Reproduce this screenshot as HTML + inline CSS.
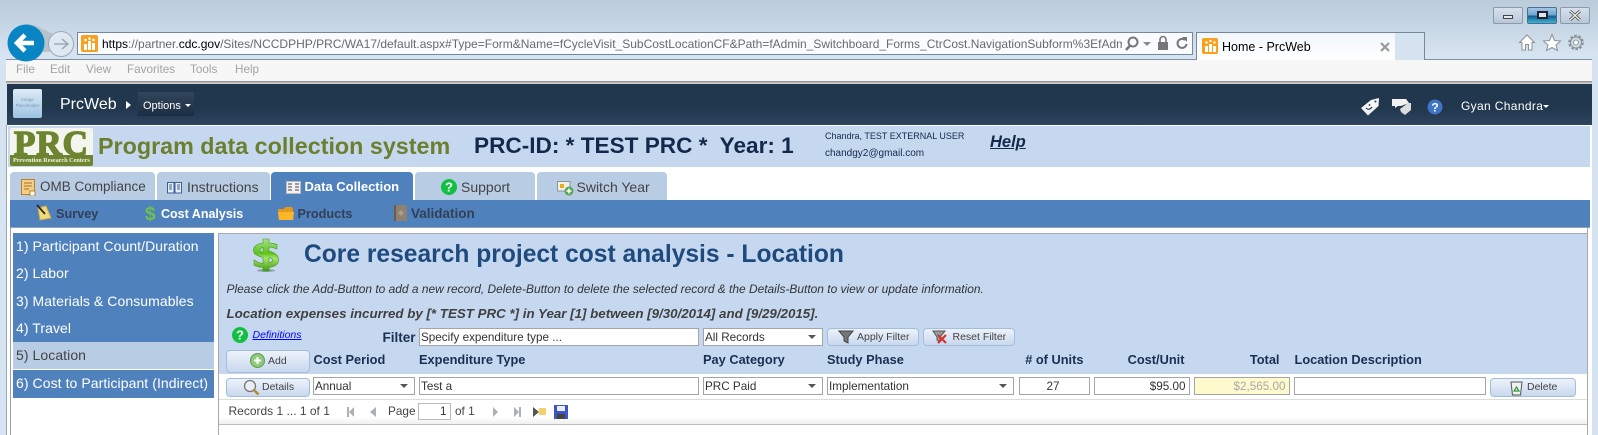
<!DOCTYPE html>
<html><head><meta charset="utf-8"><title>Home - PrcWeb</title>
<style>
html,body{margin:0;padding:0;width:1598px;height:435px;overflow:hidden;background:#d6e4f2;font-family:"Liberation Sans",Arial,sans-serif}
.a{position:absolute}
.t{position:absolute;white-space:nowrap;height:20px;line-height:20px}
.inp{position:absolute;box-sizing:border-box;background:#fff;border:1px solid #a5a5a5;height:18px;line-height:17px;font-size:11.7px;color:#333;padding:0 3px 0 1px;white-space:nowrap;overflow:hidden}
.sel:after{content:"";position:absolute;right:6px;top:6px;border-left:4px solid transparent;border-right:4px solid transparent;border-top:4px solid #555}
.btn{position:absolute;box-sizing:border-box;border:1px solid #a3bddc;border-radius:4px;background:linear-gradient(#edf2fa,#c8d8ee);font-size:10.5px;color:#444;line-height:17px}
.h{position:absolute;white-space:nowrap;font-weight:bold;font-size:12.8px;color:#1b2f52;height:20px;line-height:20px;top:350px}
.side{position:absolute;left:13px;width:201px;height:27.3px;background:#4f81bd;color:#fff;font-size:14px;letter-spacing:.07px;line-height:27px;padding-left:3px;box-sizing:border-box;white-space:nowrap}
.tab{position:absolute;top:172px;height:28px;background:#b8cce4;border-radius:4px 4px 0 0}
.tt{position:absolute;white-space:nowrap;font-size:14px;color:#444;top:177px;height:20px;line-height:20px}
.st{position:absolute;white-space:nowrap;font-size:13.5px;font-weight:bold;color:#333f55;top:204px;height:20px;line-height:20px}
.m{position:absolute;top:60px;font-size:11.7px;color:#a3a3a3;line-height:20px;height:20px}
</style></head><body>

<!-- chrome -->
<div class="a" style="left:0;top:0;width:1598px;height:59px;background:linear-gradient(#bccbd9 0,#c2d1df 15px,#d6e4f2 55px)"></div>
<div class="a" style="left:6px;top:59px;width:1586px;height:1px;background:#7f8fa4"></div>
<div class="a" style="left:6px;top:60px;width:1586px;height:21px;background:#f7f7f7"></div>
<div class="m" style="left:16px">File</div><div class="m" style="left:50px">Edit</div><div class="m" style="left:86px">View</div><div class="m" style="left:127px">Favorites</div><div class="m" style="left:190px">Tools</div><div class="m" style="left:235px">Help</div>
<div class="a" style="left:6px;top:81px;width:1586px;height:3px;background:linear-gradient(#8a8a8a,#e0e0e0)"></div>

<!-- back / forward -->
<svg class="a" style="left:4px;top:22px" width="80" height="40" viewBox="0 0 80 40">
<path d="M22 2 C34 2 42 10 50 12 L46 30 L22 30Z" fill="#b6c2cc"/>
<circle cx="22" cy="21" r="18.5" fill="#0a85c4"/>
<path d="M13 21H30M21 13L13 21L21 29" fill="none" stroke="#fff" stroke-width="4.5"/>
<circle cx="57" cy="22" r="12.5" fill="#dde8f3" stroke="#9eaab6"/>
<path d="M50 22H63M58 17L64 22L58 27" fill="none" stroke="#9eaab6" stroke-width="1.5"/>
</svg>

<!-- address bar -->
<div class="a" style="left:77px;top:32px;width:1116px;height:23px;box-sizing:border-box;background:#f9fbfe;border:1px solid #76889a"></div>
<svg class="a" style="left:81px;top:35px" width="17" height="17"><rect width="17" height="17" rx="2" fill="#f9a01e"/><path d="M3 9h3v6H3zM7 6h3v9H7zM11 8h3v7h-3z" fill="#fff"/><circle cx="4.500" cy="5" r="1.300" fill="#fff"/><circle cx="8.500" cy="3.500" r="1.300" fill="#fff"/><circle cx="12.500" cy="5" r="1.300" fill="#fff"/></svg>
<div class="t" style="left:102px;top:34px;width:1020px;overflow:hidden;font-size:12px;color:#6a6a6a"><span style="color:#000">https</span>://partner.<span style="color:#000">cdc.gov</span>/Sites/NCCDPHP/PRC/WA17/default.aspx#Type=Form&amp;Name=fCycleVisit_SubCostLocationCF&amp;Path=fAdmin_Switchboard_Forms_CtrCost.NavigationSubform%3EfAdm</div>
<svg class="a" style="left:1124px;top:35px" width="68" height="17" fill="none">
<circle cx="9" cy="7" r="4.500" stroke="#777" stroke-width="2"/><path d="M6 10.500L2 15" stroke="#777" stroke-width="2.500"/>
<path d="M19 7h8l-4 4z" fill="#888"/>
<rect x="34" y="7" width="10" height="8" fill="#777"/><path d="M36 7V4.500a3 3 0 0 1 6 0V7" stroke="#777" stroke-width="1.600"/>
<path d="M61 5a4.500 4.500 0 1 0 1.500 4" stroke="#777" stroke-width="2"/><path d="M58 2h5v5z" fill="#777"/>
</svg>

<!-- browser tab -->
<div class="a" style="left:1196px;top:32px;width:200px;height:28px;box-sizing:border-box;background:linear-gradient(#f2f6fb,#fff);border:1px solid #76889a;border-bottom:0"></div>
<div class="a" style="left:1395px;top:32px;width:30px;height:28px;box-sizing:border-box;background:#d6e4f2;border:1px solid #76889a;border-left:0;border-bottom:0"></div>
<svg class="a" style="left:1202px;top:38px" width="16" height="16"><rect width="16" height="16" rx="2" fill="#f9a01e"/><path d="M3 8h3v6H3zM7 6h3v8H7zM11 8h3v6h-3z" fill="#fff"/><circle cx="4.500" cy="4.500" r="1.200" fill="#fff"/><circle cx="8.500" cy="3" r="1.200" fill="#fff"/><circle cx="12.500" cy="4.500" r="1.200" fill="#fff"/></svg>
<div class="t" style="left:1222px;top:37px;font-size:12.500px;color:#000">Home - PrcWeb</div>
<svg class="a" style="left:1380px;top:42px" width="10" height="10"><path d="M1 1L9 9M9 1L1 9" stroke="#999" stroke-width="2.200"/></svg>

<!-- window controls -->
<div class="a" style="left:1493px;top:7px;width:30px;height:17px;box-sizing:border-box;border:1px solid #8a99ab;border-radius:2px;background:linear-gradient(#d6e1ec,#b8c7d7)"></div>
<div class="a" style="left:1503px;top:15px;width:10px;height:4px;box-sizing:border-box;background:#e8e8e8;border:1px solid #444"></div>
<div class="a" style="left:1527px;top:7px;width:30px;height:17px;box-sizing:border-box;border:1px solid #47708f;border-radius:2px;background:linear-gradient(#a4c8e6 0,#6fa5d0 45%,#15608f 55%,#3fb2d6)"></div>
<div class="a" style="left:1537px;top:11px;width:11px;height:8px;box-sizing:border-box;background:#dfe7ee;border:2px solid #223"></div>
<div class="a" style="left:1560px;top:7px;width:30px;height:17px;box-sizing:border-box;border:1px solid #8a99ab;border-radius:2px;background:linear-gradient(#d6e1ec,#b8c7d7)"></div>
<svg class="a" style="left:1568px;top:10px" width="14" height="11"><path d="M2 1L12 10M12 1L2 10" stroke="#555" stroke-width="3"/><path d="M2 1L12 10M12 1L2 10" stroke="#eee" stroke-width="1.200"/></svg>

<!-- home star gear -->
<svg class="a" style="left:1518px;top:33px" width="68" height="19" fill="#fff" stroke="#8c9197">
<path d="M9 2L1.500 9.500H4V17H7.500V11.500H10.500V17H14V9.500H16.500Z"/>
<path d="M34 1.500L36.500 7.500L42.500 8L38 12L39.500 17.500L34 14.500L28.500 17.500L30 12L25.500 8L31.500 7.500Z"/>
<circle cx="58" cy="9.500" r="6.500" stroke-width="2.500" stroke-dasharray="2.500 1.600" fill="none"/><circle cx="58" cy="9.500" r="5.500" fill="none"/><circle cx="58" cy="9.500" r="2.500"/>
</svg>

<!-- nav -->
<div class="a" style="left:7px;top:84px;width:1585px;height:41px;background:linear-gradient(#21374e 0,#21374e 24px,#2e445e)"></div>
<div class="a" style="left:13px;top:89px;width:29px;height:29px;border-radius:2px;background:linear-gradient(#dfeaf5,#9cc4e2);font-size:4.500px;line-height:6px;color:#7a9dbb;text-align:center;box-sizing:border-box;padding-top:8px">Image<br>Placeholder</div>
<div class="t" style="left:60px;top:95px;font-size:16px;color:#fff">PrcWeb</div>
<div class="a" style="left:126px;top:101px;border-left:5px solid #fff;border-top:4px solid transparent;border-bottom:4px solid transparent"></div>
<div class="a" style="left:138px;top:92px;width:56px;height:24px;background:linear-gradient(#32465c,#1b2e43)"></div>
<div class="t" style="left:143px;top:96px;font-size:11px;color:#fff">Options</div>
<div class="a" style="left:185px;top:104px;border-top:3px solid #fff;border-left:3px solid transparent;border-right:3px solid transparent"></div>
<svg class="a" style="left:1360px;top:97px" width="84" height="20">
<path d="M1 11L11 3L19 1L18.500 9L8 18.500Z" fill="#f4f4f4"/><path d="M6 11q3 3 6-1" fill="none" stroke="#21374e" stroke-width="1.100"/><circle cx="9.500" cy="8" r=".9" fill="#21374e"/><circle cx="15.500" cy="4.500" r="1" fill="#21374e"/>
<path d="M32 2H46L49 6L41 9L38 9L35 11V9H32Z" fill="#f2f2f2"/><path d="M40 12L48 6L51 6V13L45 18L41 15Z" fill="#dcdcdc"/>
<circle cx="75" cy="10" r="7.500" fill="#3f74c6"/><text x="75" y="14.500" font-size="12" font-weight="bold" fill="#fff" text-anchor="middle" font-family="Liberation Sans">?</text>
</svg>
<div class="t" style="left:1461px;top:96px;font-size:12px;letter-spacing:.35px;color:#fff">Gyan Chandra</div>
<div class="a" style="left:1543px;top:105px;border-top:3px solid #fff;border-left:3px solid transparent;border-right:3px solid transparent"></div>

<!-- page -->
<div class="a" style="left:6px;top:125px;width:1px;height:310px;background:#9aa7b5"></div>
<div class="a" style="left:7px;top:125px;width:1585px;height:310px;background:#fff"></div>
<div class="a" style="left:10px;top:228px;width:1px;height:207px;background:#a0a0a0"></div>
<div class="a" style="left:8px;top:126px;width:1582px;height:41px;background:#c6d8f0"></div>

<!-- PRC logo -->
<div class="a" style="left:10px;top:128px;width:83px;height:38px;background:#f4f5ec;box-sizing:border-box;border-radius:2px;overflow:hidden">
<div class="a" style="left:0;top:27px;width:83px;height:11px;background:#6d8430"></div>
<div class="t" style="left:0;top:0;width:83px;height:30px;line-height:31px;font-family:'Liberation Serif',serif;font-weight:bold;font-size:35px;letter-spacing:1px;color:#6d8430;text-align:center;-webkit-text-stroke:1.500px #6d8430">PRC</div>
<div class="t" style="left:3px;top:27px;font-family:'Liberation Serif',serif;font-size:6.200px;font-weight:bold;color:#f3f3e6;line-height:11px;height:11px;width:78px;overflow:hidden">Prevention Research Centers</div>
</div>

<div class="t" style="left:98px;top:132px;height:28px;line-height:28px;font-size:23.300px;font-weight:bold;color:#6b7f2e">Program data collection system</div>
<div class="t" style="left:474px;top:132px;height:28px;line-height:28px;font-size:22.600px;font-weight:bold;color:#14284b;white-space:pre">PRC-ID: * TEST PRC *  Year: 1</div>
<div class="t" style="left:825px;top:126px;font-size:9px;color:#14284b">Chandra, TEST EXTERNAL USER</div>
<div class="t" style="left:825px;top:144px;font-size:10px;color:#14284b">chandgy2@gmail.com</div>
<div class="t" style="left:990px;top:132px;font-size:16.500px;font-weight:bold;font-style:italic;text-decoration:underline;color:#14284b">Help</div>

<!-- tabs -->
<div class="tab" style="left:10px;width:145px"></div>
<div class="tab" style="left:157px;width:113px"></div>
<div class="tab" style="left:271px;width:142px;background:#4f81bd"></div>
<div class="tab" style="left:415px;width:120px"></div>
<div class="tab" style="left:537px;width:130px"></div>
<svg class="a" style="left:21px;top:179px" width="15" height="17"><rect x=".5" y=".5" width="13" height="15" fill="#f3cf83" stroke="#b8802a"/><path d="M3 4h8M3 7h8M3 10h5" stroke="#a4722b"/><rect x="9" y="12" width="5" height="5" fill="#fff" stroke="#b8802a"/></svg>
<div class="tt" style="left:40px;font-size:13.500px">OMB Compliance</div>
<svg class="a" style="left:167px;top:181px" width="15" height="13"><path d="M.5 1.500H7V12H.5ZM8 1.500H14.500V12H8Z" fill="#e8eef6" stroke="#3d5f99"/><path d="M2 4h3M2 6h3M2 8h3M10 4h3M10 6h3M10 8h3" stroke="#3d5f99"/></svg>
<div class="tt" style="left:187px">Instructions</div>
<svg class="a" style="left:286px;top:181px" width="15" height="13"><rect x=".5" y=".5" width="14" height="12" fill="#f2f2f2" stroke="#bbb"/><path d="M2 3h4M2 6h4M2 9h4M9 3h4M9 6h4M9 9h4" stroke="#666" stroke-width="1.200"/></svg>
<div class="tt" style="left:304.500px;color:#fff;font-weight:bold;font-size:13px">Data Collection</div>
<svg class="a" style="left:441px;top:179px" width="16" height="16"><circle cx="8" cy="8" r="8" fill="#10c040"/><text x="8" y="12.500" font-size="13" font-weight="bold" fill="#fff" text-anchor="middle" font-family="Liberation Sans">?</text></svg>
<div class="tt" style="left:461px">Support</div>
<svg class="a" style="left:557px;top:179px" width="17" height="17"><path d="M.5 2.500H13V12H.5Z" fill="#f2efe4" stroke="#8892a0"/><rect x="3" y="5" width="4" height="4" fill="#e9ad22"/><circle cx="12" cy="12" r="4.500" fill="#57a84e"/><path d="M12 9.500V14.500M9.500 12H14.500" stroke="#fff" stroke-width="1.500"/></svg>
<div class="tt" style="left:576.500px">Switch Year</div>

<!-- subnav -->
<div class="a" style="left:10px;top:200px;width:1580px;height:28px;background:#4f81bd;border-bottom:1px solid #8ea3bd;box-sizing:border-box"></div>
<svg class="a" style="left:36px;top:204px" width="16" height="17"><path d="M2 4L10 2L15 14L4 16Z" fill="#f0d97a" stroke="#c7ac4a"/><path d="M1 1L9 10" stroke="#2a2a2a" stroke-width="1.800"/></svg>
<div class="st" style="left:56px;font-size:12.700px">Survey</div>
<div class="t" style="left:145px;top:203px;height:24px;line-height:24px;font-size:19px;font-weight:bold;color:#6cc24a">$</div>
<div class="st" style="left:161px;color:#fff;font-size:12.500px">Cost Analysis</div>
<svg class="a" style="left:278px;top:207px" width="16" height="13"><path d="M0 2H6L7 0H14L15 3V13H1Z" fill="#e69818"/><path d="M0 5H16L15 13H1Z" fill="#fbb62a"/></svg>
<div class="st" style="left:297.500px;font-size:12.700px">Products</div>
<svg class="a" style="left:394px;top:205px" width="13" height="16"><rect width="13" height="16" fill="#6e5a48"/><rect x="2" width="11" height="16" fill="#8d8170"/><path d="M7 5L10 8L7 11L4 8Z" fill="#a99d8b"/></svg>
<div class="st" style="left:411px">Validation</div>

<!-- sidebar -->
<div class="side" style="top:233px">1) Participant Count/Duration</div>
<div class="side" style="top:260.300px">2) Labor</div>
<div class="side" style="top:287.600px">3) Materials &amp; Consumables</div>
<div class="side" style="top:314.900px">4) Travel</div>
<div class="side" style="top:342.200px;background:#b8cce4;color:#444">5) Location</div>
<div class="side" style="top:369.500px;height:28px">6) Cost to Participant (Indirect)</div>

<!-- main panel -->
<div class="a" style="left:218px;top:233px;width:1369px;height:142px;background:#c6d8f0;border-top:1px solid #a9a9a9;box-sizing:border-box"></div>
<div class="a" style="left:218px;top:233px;width:1px;height:202px;background:#a9a9a9"></div>
<div class="a" style="left:1587px;top:228px;width:1px;height:207px;background:#a9a9a9"></div>
<div class="a" style="left:219px;top:399px;width:1368px;height:1px;background:#dcdcdc"></div>
<div class="a" style="left:219px;top:400px;width:1368px;height:24px;background:linear-gradient(#fff,#fff 70%,#f0f0f0)"></div>
<div class="a" style="left:219px;top:424px;width:1368px;height:1px;background:#bdbdbd"></div>

<svg class="a" style="left:253px;top:237px" width="26" height="36"><defs><linearGradient id="g" x1="0" y1="0" x2="0" y2="1"><stop offset="0" stop-color="#a6e08a"/><stop offset=".45" stop-color="#5fc31c"/><stop offset=".6" stop-color="#a8e46a"/><stop offset="1" stop-color="#3f9e10"/></linearGradient></defs><ellipse cx="13" cy="33.500" rx="9" ry="1.500" fill="#8da0a8"/><path d="M10 2H16V6C19 6 23 7 24 7.500V12C20 10.500 17 10 16 10V14C22 15.500 25.500 18 25.500 23C25.500 27.500 21 30 16 30.500V34H10V30.500C6 30.500 2 29 1 28V23C5 25.500 8 26.500 10 26.500V20.500C4 19 .5 17 .5 13C.5 9 5 6.500 10 6ZM10 10.500C8 11 7 12 7 13C7 14 8 15 10 15.500ZM16 20.500V26C18 25.500 19.500 24.500 19.500 23C19.500 21.800 18 21 16 20.500Z" fill="url(#g)" stroke="#3e9a16" stroke-width=".6"/></svg>
<div class="t" style="left:304px;top:239px;height:32px;line-height:32px;font-size:24.600px;font-weight:bold;color:#1f4a7d">Core research project cost analysis - Location</div>
<div class="t" style="left:226.500px;top:279px;font-size:11.950px;font-style:italic;color:#333">Please click the Add-Button to add a new record, Delete-Button to delete the selected record &amp; the Details-Button to view or update information.</div>
<div class="t" style="left:226.500px;top:304px;font-size:13.340px;font-weight:bold;font-style:italic;color:#404040">Location expenses incurred by [* TEST PRC *] in Year [1] between [9/30/2014] and [9/29/2015].</div>

<svg class="a" style="left:232px;top:327px" width="16" height="16"><circle cx="8" cy="8" r="8" fill="#10c040"/><text x="8" y="12.500" font-size="13" font-weight="bold" fill="#fff" text-anchor="middle" font-family="Liberation Sans">?</text></svg>
<div class="t" style="left:252.500px;top:325px;font-size:10.500px;font-style:italic;color:#00f;text-decoration:underline">Definitions</div>
<div class="t" style="left:382.500px;top:328px;font-size:13.500px;font-weight:bold;color:#1b2f52">Filter</div>
<div class="inp" style="left:419px;top:327.500px;width:280px">Specify expenditure type ...</div>
<div class="inp sel" style="left:703px;top:327.500px;width:119.500px">All Records</div>
<div class="btn" style="left:827px;top:327.500px;width:91.500px;height:18.500px;padding-left:29px">Apply Filter</div>
<svg class="a" style="left:838px;top:329.500px" width="16" height="14"><path d="M1 1H15L10 7V13L6 11V7Z" fill="#777" stroke="#444"/></svg>
<div class="btn" style="left:922.500px;top:327.500px;width:92px;height:18.500px;padding-left:29px">Reset Filter</div>
<svg class="a" style="left:932px;top:329.500px" width="16" height="15"><path d="M1 1H13L8 7V12L5 10V7Z" fill="#999" stroke="#555"/><path d="M6 5L14 13M14 5L6 13" stroke="#d9332a" stroke-width="2.200"/></svg>

<div class="btn" style="left:226px;top:350px;width:84px;height:22.500px;padding-left:41px;line-height:20px">Add</div>
<svg class="a" style="left:250px;top:353px" width="15" height="15"><circle cx="7.500" cy="7.500" r="7" fill="#8fca7d" stroke="#5a9a4a"/><path d="M7.500 4V11M4 7.500H11" stroke="#fff" stroke-width="2"/></svg>
<div class="h" style="left:313.500px">Cost Period</div>
<div class="h" style="left:419px">Expenditure Type</div>
<div class="h" style="left:703px">Pay Category</div>
<div class="h" style="left:827px">Study Phase</div>
<div class="h" style="right:514.500px">#&nbsp;of Units</div>
<div class="h" style="right:413.500px">Cost/Unit</div>
<div class="h" style="right:318.500px">Total</div>
<div class="h" style="left:1294.500px">Location Description</div>

<!-- row -->
<div class="a" style="left:219px;top:374px;width:1368px;height:25px;background:#fff"></div>
<div class="btn" style="left:226px;top:377.500px;width:84px;height:19px;padding-left:35px">Details</div>
<svg class="a" style="left:243px;top:379px" width="17" height="17"><circle cx="7" cy="7" r="5.500" fill="#e8eef4" stroke="#777" stroke-width="1.300"/><path d="M11 11L15.500 15.500" stroke="#b58a2c" stroke-width="2.500"/></svg>
<div class="inp sel" style="left:313px;top:377px;width:101.500px">Annual</div>
<div class="inp" style="left:419px;top:377px;width:280px">Test a</div>
<div class="inp sel" style="left:703px;top:377px;width:119.500px">PRC Paid</div>
<div class="inp sel" style="left:827px;top:377px;width:187px">Implementation</div>
<div class="inp" style="left:1018.500px;top:377px;width:71px;text-align:center">27</div>
<div class="inp" style="left:1094px;top:377px;width:95.500px;text-align:right">$95.00</div>
<div class="inp" style="left:1194px;top:377px;width:95.500px;text-align:right;background:#fffacd;color:#a8a8a8">$2,565.00</div>
<div class="inp" style="left:1294px;top:377px;width:191.500px"></div>
<div class="btn" style="left:1490px;top:377.500px;width:86px;height:19.500px;padding-left:36px">Delete</div>
<svg class="a" style="left:1510px;top:379.500px" width="13" height="16"><path d="M1 2H12L10.500 15H2.500Z" fill="#f0f0f0" stroke="#555"/><path d="M6.500 7L9 11H4Z" fill="none" stroke="#2a9a3a" stroke-width="1.200"/></svg>

<!-- pager -->
<div class="t" style="left:228.500px;top:400.500px;font-size:12px;color:#444">Records 1 ... 1 of 1</div>
<svg class="a" style="left:346px;top:406px" width="175" height="12" fill="#aab2b8"><rect x="1" y="1" width="2" height="10"/><path d="M8 1V11L3 6Z"/><path d="M30 1V11L24 6Z"/><path d="M147 1V11L152 6Z"/><path d="M168 1V11L173 6Z"/><rect x="173" y="1" width="2" height="10"/></svg>
<div class="t" style="left:388px;top:400.500px;font-size:11.800px;color:#444">Page</div>
<div class="inp" style="left:417.500px;top:403px;width:33px;height:17px;line-height:15px;text-align:right;border-color:#bbb">1</div>
<div class="t" style="left:455px;top:400.500px;font-size:11.800px;color:#444">of 1</div>
<svg class="a" style="left:533px;top:405px" width="36" height="14"><path d="M0 2V12L6 7Z" fill="#555"/><rect x="6" y="3" width="7" height="7" fill="#f2d36a"/><rect x="21" y="0" width="14" height="14" fill="#3c56c4"/><rect x="24" y="1" width="8" height="5" fill="#e8eef6"/><rect x="24" y="9" width="8" height="5" fill="#444"/></svg>
</body></html>
